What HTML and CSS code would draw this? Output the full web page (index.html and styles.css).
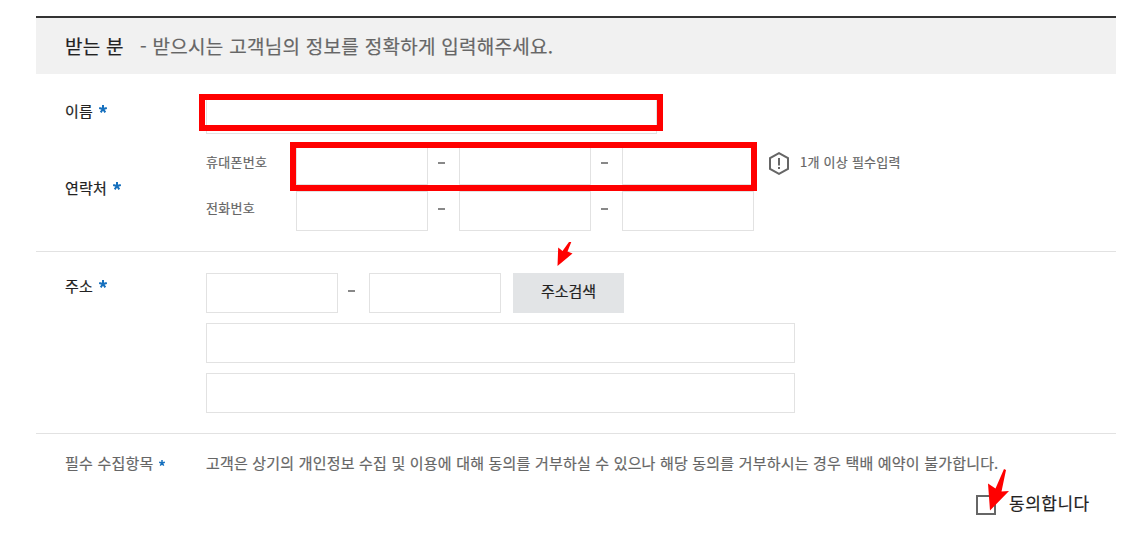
FILE: index.html
```
<!DOCTYPE html>
<html lang="ko">
<head>
    <meta charset="UTF-8">
    <meta name="viewport" content="width=device-width, initial-scale=1.0">
    <title>받는 분</title>
    <link rel="stylesheet" href="styles.css">
</head>
<body>
    <form class="receiver">
        <div class="title-bar">
            <h2>받는 분</h2>
            <p>- 받으시는 고객님의 정보를 정확하게 입력해주세요.</p>
        </div>

        <div class="row name-row">
            <label class="label" for="name">이름 <svg class="star" viewBox="0 0 8 8"><path d="M4 0V4M.2 2.9L4 4M7.8 2.9L4 4M1.7 7.4L4 4M6.3 7.4L4 4"/></svg></label>
            <input type="text" id="name" class="input-name">
        </div>

        <div class="row contact-row">
            <span class="label">연락처 <svg class="star" viewBox="0 0 8 8"><path d="M4 0V4M.2 2.9L4 4M7.8 2.9L4 4M1.7 7.4L4 4M6.3 7.4L4 4"/></svg></span>
            <div class="phones">
                <div class="phone">
                    <span class="phone-label">휴대폰번호</span>
                    <input type="text"><i class="dash"></i><input type="text"><i class="dash"></i><input type="text">
                    <svg class="notice-icon" viewBox="0 0 20 23"><path d="M10 1.2L19 6.2V16.8L10 21.8L1 16.8V6.2Z"/><path d="M10 6V13.5M10 15V17"/></svg>
                    <span class="notice">1개 이상 필수입력</span>
                </div>
                <div class="phone">
                    <span class="phone-label">전화번호</span>
                    <input type="text"><i class="dash"></i><input type="text"><i class="dash"></i><input type="text">
                </div>
            </div>
        </div>

        <div class="row address-row">
            <span class="label">주소 <svg class="star" viewBox="0 0 8 8"><path d="M4 0V4M.2 2.9L4 4M7.8 2.9L4 4M1.7 7.4L4 4M6.3 7.4L4 4"/></svg></span>
            <div class="address">
                <div class="zip">
                    <input type="text"><i class="dash"></i><input type="text">
                    <button type="button">주소검색</button>
                </div>
                <input type="text" class="input-address">
                <input type="text" class="input-address">
            </div>
        </div>

        <div class="row agree-row">
            <span class="label">필수 수집항목 <svg class="star small" viewBox="0 0 8 8"><path d="M4 0V4M.2 2.9L4 4M7.8 2.9L4 4M1.7 7.4L4 4M6.3 7.4L4 4"/></svg></span>
            <p class="agree-text">고객은 상기의 개인정보 수집 및 이용에 대해 동의를 거부하실 수 있으나 해당 동의를 거부하시는 경우 택배 예약이 불가합니다.</p>
        </div>
        <label class="agree"><input type="checkbox"><span>동의합니다</span></label>
    </form>

    <!-- guide marks over the form -->
    <div class="mark mark-name"></div>
    <div class="mark mark-phone"></div>
    <svg class="arrow arrow-search" viewBox="0 0 16 26"><path d="M12 1L14.3 1L10.5 10.5L15.5 12.5L.5 25L1.2 6.5L5.5 10Z"/></svg>
    <svg class="arrow arrow-agree" viewBox="0 0 22 42"><path d="M16 0L18 1L13.5 22.5L21 22L2 41.5L0 14.5L7.5 19.5Z"/></svg>
</body>
</html>
```
FILE: styles.css
```
* {
    box-sizing: border-box;
}

body {
    position: relative;
    margin: 0;
    padding: 16px 23px 0 36px;
    background-color: #fff;
    color: #666;
    font-family: "Noto Sans CJK KR", sans-serif;
    font-size: 15px;
    -webkit-text-stroke: 0.2px;
}

h2, p {
    margin: 0;
    font-weight: normal;
}

.title-bar {
    display: flex;
    height: 58px;
    padding-left: 29px;
    border-top: 2px solid #333;
    background-color: #f1f1f1;
    font-size: 19px;
    line-height: 55px;
    letter-spacing: 0.28px;
    white-space: pre;
}

.title-bar h2 {
    width: 75px;
    color: #222;
    font-size: 19px;
}

.row {
    display: flex;
    padding-left: 29px;
}

.label {
    flex: none;
    width: 141px;
    color: #222;
    line-height: 22px;
    letter-spacing: 0.2px;
}

.star {
    width: 8px;
    height: 8px;
    margin-left: 2px;
    vertical-align: 4px;
    fill: none;
    stroke: #1670be;
    stroke-width: 2;
}

.star.small {
    width: 6px;
    height: 6px;
    margin-left: 1px;
    vertical-align: 3px;
}

input {
    display: block;
    width: 132px;
    height: 40px;
    margin: 0;
    padding: 0 10px;
    border: 1px solid #e2e2e2;
    border-radius: 0;
    background-color: #fff;
    font: inherit;
}

.name-row {
    padding-top: 20px;
}

.name-row .label {
    padding-top: 6px;
}

.input-name {
    width: 451px;
}

.contact-row {
    height: 118px;
    padding-top: 11px;
    border-bottom: 1px solid #e2e2e2;
}

.contact-row .label {
    padding-top: 32px;
}

.phone {
    display: flex;
    align-items: center;
    margin-bottom: 6px;
}

.phone-label {
    width: 90px;
    padding-bottom: 7px;
    font-size: 13px;
    letter-spacing: 0.3px;
}

.dash {
    width: 7px;
    height: 2px;
    margin: 0 14px 5px 10px;
    background-color: #888;
}

.notice-icon {
    width: 20px;
    height: 23px;
    margin: 0 11px 3px 15px;
    fill: none;
    stroke: #666;
    stroke-width: 2;
}

.notice {
    padding-bottom: 7px;
    font-size: 13px;
    letter-spacing: 0.25px;
}

.address-row {
    height: 182px;
    padding-top: 21px;
    border-bottom: 1px solid #e2e2e2;
}

.address-row .label {
    padding-top: 2px;
}

.zip {
    display: flex;
    align-items: center;
}

button {
    width: 111px;
    height: 40px;
    margin-left: 12px;
    padding: 0 0 5px;
    border: 0;
    background-color: #e2e4e6;
    color: #222;
    font: inherit;
}

.input-address {
    width: 589px;
    margin-top: 10px;
}

.agree-row {
    padding-top: 18px;
}

.agree-row .label {
    color: #666;
}

.agree-text {
    line-height: 22px;
    letter-spacing: 0.19px;
    white-space: nowrap;
}

.agree {
    display: flex;
    margin: 21px 0 0 940px;
    color: #222;
    font-size: 17px;
    line-height: 16px;
}

.agree input {
    width: 20px;
    height: 20px;
    margin-right: 13px;
    padding: 0;
    border: 2px solid #666;
    appearance: none;
}

.agree span {
    letter-spacing: 0.5px;
}

.mark {
    position: absolute;
    border: 6px solid #f00;
}

.mark-name {
    left: 199px;
    top: 94px;
    width: 464px;
    height: 37px;
}

.mark-phone {
    left: 290px;
    top: 142px;
    width: 467px;
    height: 49px;
}

.arrow {
    position: absolute;
    fill: #f00;
}

.arrow-search {
    left: 557px;
    top: 241px;
    width: 16px;
    height: 26px;
}

.arrow-agree {
    left: 988px;
    top: 469px;
    width: 22px;
    height: 42px;
}
```
